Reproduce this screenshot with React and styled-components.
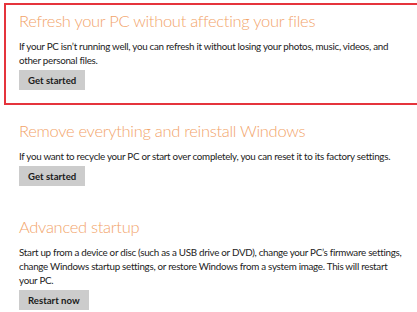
import React from "react";
import styled, { createGlobalStyle } from "styled-components";

const Global = createGlobalStyle`
  html, body { margin: 0; padding: 0; background: #ffffff; overflow: hidden; }
  body { font-family: Lato, "Open Sans", "Liberation Sans", sans-serif; }
`;

const Page = styled.div`
  display: flex;
  flex-direction: column;
  gap: 8px;
  padding: 3px 0 0 4px;
  width: 440px;
`;

const Section = styled.section`
  display: flex;
  flex-direction: column;
  align-items: flex-start;
  border: 2px solid ${(p) => (p.$highlight ? "#e5343c" : "transparent")};
  padding: 4px 13px 13px 13px;
`;

const Title = styled.h2`
  margin: 0;
  font-family: Lato, "Open Sans", sans-serif;
  font-weight: 300;
  font-size: 16.5px;
  letter-spacing: -0.3px;
  line-height: 24px;
  color: #f2a46a;
  white-space: nowrap;
`;

const Text = styled.p`
  margin: 6px 0 3px 0;
  width: 386px;
  font-size: 9.8px;
  letter-spacing: -0.28px;
  line-height: 14px;
  color: #222222;
`;

const Button = styled.button`
  border: none;
  background: #cccccc;
  color: #1a1a1a;
  font-family: Lato, "Open Sans", sans-serif;
  font-weight: 700;
  font-size: 9.6px;
  height: 20px;
  padding: 0 9px;
  cursor: pointer;
`;

const sections = [
  {
    title: "Refresh your PC without affecting your files",
    text: "If your PC isn\u2019t running well, you can refresh it without losing your photos, music, videos, and other personal files.",
    button: "Get started",
    highlight: true,
  },
  {
    title: "Remove everything and reinstall Windows",
    text: "If you want to recycle your PC or start over completely, you can reset it to its factory settings.",
    button: "Get started",
  },
  {
    title: "Advanced startup",
    text: "Start up from a device or disc (such as a USB drive or DVD), change your PC\u2019s firmware settings, change Windows startup settings, or restore Windows from a system image. This will restart your PC.",
    button: "Restart now",
  },
];

export default function App() {
  return (
    <>
      <Global />
      <Page>
        {sections.map((s) => (
          <Section key={s.title} $highlight={s.highlight}>
            <Title>{s.title}</Title>
            <Text>{s.text}</Text>
            <Button>{s.button}</Button>
          </Section>
        ))}
      </Page>
    </>
  );
}
